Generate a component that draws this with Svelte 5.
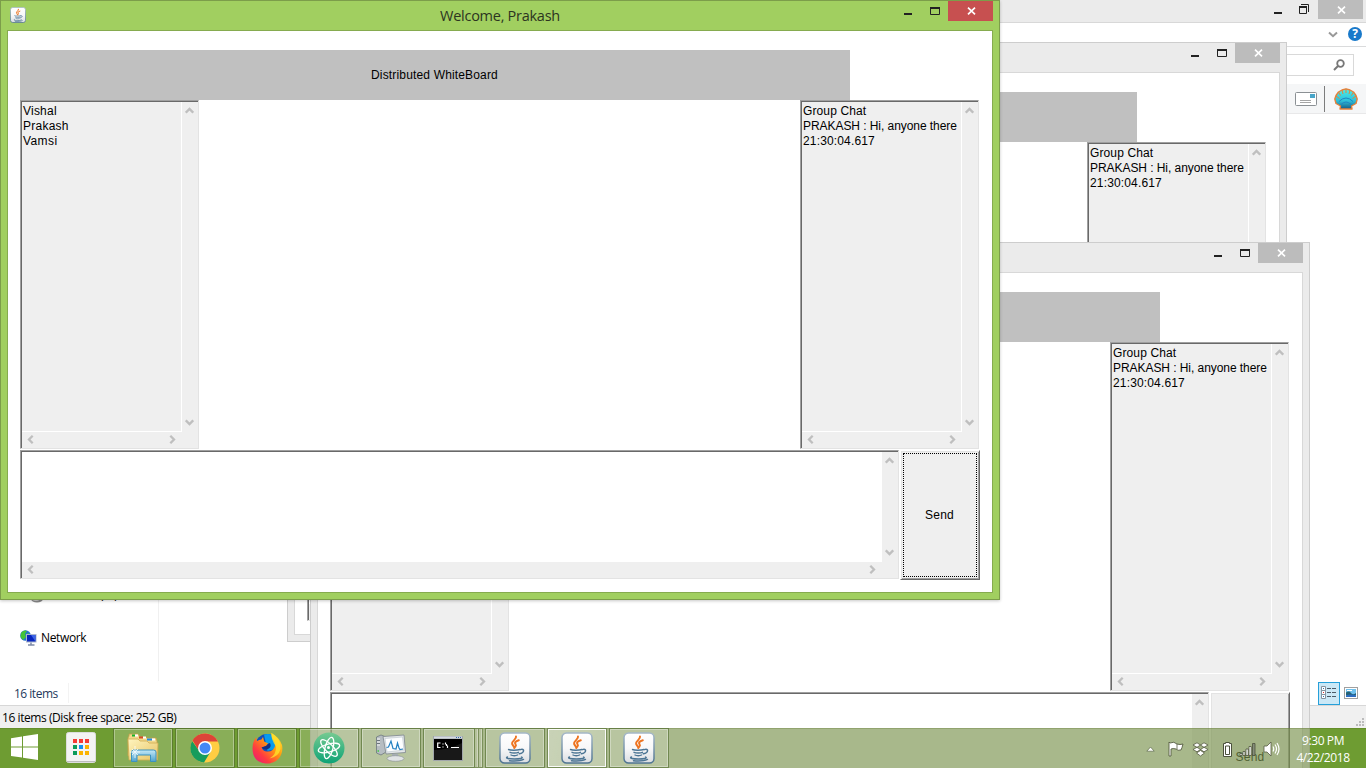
<script>
  const chat = [
    { t: 'Group Chat', s: 0.12 },
    { t: 'PRAKASH : Hi, anyone there', s: -0.06 },
    { t: '21:30:04.617', s: 0.15 }
  ];
  const names = [{ t: 'Vishal', s: 0.22 }, { t: 'Prakash', s: 0.25 }, { t: 'Vamsi', s: 0.4 }];
  const windows = [
    { x: 287, y: 42, title: '', users: [], active: false },
    { x: 310, y: 242, title: '', users: [], active: false },
    { x: 0, y: 0, title: 'Welcome, Prakash', users: names, active: true }
  ];
  const tasks = ['folder', 'chrome', 'firefox', 'atom', 'monitor', 'cmd', 'java', 'java-on', 'java'];
</script>

{#snippet java(size)}
  <svg width={size} height={size} viewBox="0 0 32 32">
    <defs>
      <linearGradient id="jb" x1="0" y1="0" x2="0" y2="1"><stop offset="0" stop-color="#fff" /><stop offset="0.5" stop-color="#f8f8f9" /><stop offset="1" stop-color="#dadde1" /></linearGradient>
      <linearGradient id="je" x1="0" y1="0" x2="0" y2="1"><stop offset="0" stop-color="#a5b8c8" /><stop offset="1" stop-color="#4e7391" /></linearGradient>
    </defs>
    <rect x="1" y="1" width="30" height="30" rx="4.5" fill="url(#jb)" stroke="url(#je)" stroke-width="1.5" />
    <g fill="none" stroke-linecap="round">
      <path d="M17 4.500c.8 3-4.500 4.200-3.900 7.300.3 1.500 2 2.400 2.300 4.200M19.800 8.300c-3.300 1-4.600 2.200-3.300 3.800.8 1 .4 2-.3 2.900" stroke="#ee7420" stroke-width="2" />
      <path d="M9.500 17.500c2 .9 8 .9 11.500 0M11 20.300c2 1 6.500 1 8.500 0M12 23c1.500.9 5 .9 6.500 0M8.500 25c-3 1.300 2 2 7 2s9.500-.7 7-2M10.500 28.800c5 .4 11 .1 14-1.400" stroke="#4c7594" stroke-width="1.400" />
      <path d="M21.500 17.600c4-1.300 4.600 2.900-1.200 4.200" stroke="#4c7594" stroke-width="1.500" />
    </g>
  </svg>
{/snippet}

{#snippet chev(dir)}
  <svg class="chev {dir}" width="9" height="7" viewBox="0 0 9 7"><path d="M.8 5.700 4.500 2 8.200 5.700" fill="none" stroke="#bfbfbf" stroke-width="2.300" /></svg>
{/snippet}

{#snippet scrollArea(lines, kind)}
  <div class="area {kind}">
    <div class="text">{#each lines as l}<div style="letter-spacing:{l.s}px">{l.t}</div>{/each}</div>
    <div class="vbar">{@render chev('up')}{@render chev('down')}</div>
    <div class="hbar">{@render chev('left')}{@render chev('right')}</div>
  </div>
{/snippet}

{#snippet controls(restore)}
  <div class="controls">
    <span class="min"><i></i></span>
    <span class="max">
      {#if restore}
        <svg width="10" height="10" viewBox="0 0 10 10"><path d="M.5 3h7v6.500h-7zM2 .5h7.500V8" fill="none" stroke="#222" /><path d="M0 3h8" stroke="#222" stroke-width="2" /></svg>
      {:else}
        <svg width="10" height="8" viewBox="0 0 10 8"><path d="M.5 1h9v6.500h-9z" fill="none" stroke="#222" /><path d="M0 1h10" stroke="#222" stroke-width="2" /></svg>
      {/if}
    </span>
    <span class="close"><svg width="9" height="8" viewBox="0 0 9 8"><path d="M1 .7 8 7.300M8 .7 1 7.300" stroke="#fff" stroke-width="1.700" /></svg></span>
  </div>
{/snippet}

<div class="desktop">
  <div class="explorer">
    <div class="ex-title">{@render controls(true)}</div>
    <div class="ex-ribbon">
      <svg width="10" height="7" viewBox="0 0 10 7"><path d="M1 1.500 5 5.200 9 1.500" fill="none" stroke="#999" stroke-width="2" /></svg>
      <span class="help">?</span>
    </div>
    <div class="ex-address">
      <div class="search"><svg width="12" height="12" viewBox="0 0 12 12"><circle cx="7.500" cy="4.500" r="3.300" fill="none" stroke="#777" stroke-width="1.800" /><path d="M5 7 1 11" stroke="#777" stroke-width="2" /></svg></div>
    </div>
    <div class="ex-tools">
      <svg width="22" height="14" viewBox="0 0 22 14"><rect x=".5" y=".5" width="21" height="13" rx="1" fill="#fff" stroke="#8b9094" /><path d="M15 2h5v4h-5z" fill="#48a5c9" /><path d="M5 8.500h11M5 10.500h11" stroke="#a5a5a5" /></svg>
      <i class="bar"></i>
      <svg width="24" height="22" viewBox="0 0 24 22">
        <defs><linearGradient id="sh" x1="0" y1="0" x2="0" y2="1"><stop offset="0" stop-color="#4af0ea" /><stop offset=".6" stop-color="#2fbfd8" /><stop offset="1" stop-color="#155a86" /></linearGradient></defs>
        <path d="M6 21 6.500 18 2 15.500 .8 11 2 7.500 4.500 4 8 2 12 .8l4 1.200L19.500 4 22 7.500l1.200 3.500L22 15.500l-4.500 2.500 .5 3z" fill="url(#sh)" stroke="#e6813a" stroke-width="1.400" stroke-linejoin="round" />
        <path d="M12 1v4M8 2l1 4M16 2l-1 4M4.500 4l2 3.500M19.500 4l-2 3.500M2 8l3.500 2.500M22 8l-3.500 2.500" stroke="#e6813a" stroke-width="1" />
        <path d="M5 13.500q7-7 14 0M7 16.500q5-5 10 0" fill="none" stroke="#1f86c4" />
      </svg>
    </div>
    <div class="ex-body">
      <div class="nav">
        <div class="row drive"><svg width="16" height="16" viewBox="0 0 16 16"><ellipse cx="8" cy="12" rx="6" ry="3.500" fill="#888" /><ellipse cx="7" cy="11" rx="5" ry="3" fill="#ccc" /></svg><span>(C:)</span></div>
        <div class="row">
          <svg width="17" height="16" viewBox="0 0 17 16"><circle cx="5.500" cy="5.500" r="5.300" fill="#2574cf" /><path d="M1 3Q4-.5 7 1L5 4 6 7 3 10 .5 7zM7 3l3 1v3z" fill="#43c436" /><rect x="6" y="4" width="10.500" height="8.500" fill="#aab6cd" /><rect x="7" y="5" width="8.500" height="6.500" fill="#0825bd" /><path d="M11 5h4.500v6.500z" fill="#3d64e6" /><path d="M11 12.500v2M8 15h6.500" stroke="#7e8aa8" stroke-width="1.500" /></svg>
          <span>Network</span>
        </div>
      </div>
    </div>
    <div class="ex-details">
      <span class="count">16 items</span>
      <div class="views">
        <span class="sel"><svg width="16" height="14" viewBox="0 0 16 14"><g fill="#fff" stroke="#8593a0"><path d="M.5.500h4v4h-4zM.5 4.500h4v4h-4zM.5 8.500h4v4h-4z" /></g><path d="M2 2.500h1M2 10.500h1" stroke="#3674ad" /><path d="M2 6.500h1" stroke="#d33" /><path d="M6 2.500h4M11 2.500h4M6 6.500h4M11 6.500h4M6 10.500h4M11 10.500h4" stroke="#4c5a66" /></svg></span>
        <svg width="14" height="12" viewBox="0 0 14 12"><rect x=".5" y=".5" width="13" height="11" fill="#fff" stroke="#a0a0a0" /><path d="M2 2h10v8H2z" fill="#6fc1ed" /><path d="M2 5.500q3-2 5 .5t5 0v2.500H2z" fill="#276275" /><path d="M2 8.500q5-2 10 0v1.500H2z" fill="#2b6cc0" /><path d="M3 3.500h5" stroke="#fff" /></svg>
      </div>
    </div>
    <div class="ex-status"><span>16 items (Disk free space: 252 GB)</span>
      <svg width="9" height="9" viewBox="0 0 9 9" fill="#bcbcbc"><path d="M6 0h2v2H6zM3 3h2v2H3zM6 3h2v2H6zM0 6h2v2H0zM3 6h2v2H3zM6 6h2v2H6z" /></svg>
    </div>
  </div>

  {#each windows as w}
    <div class="window" class:active={w.active} style="left:{w.x}px;top:{w.y}px">
      <div class="titlebar">
        {#if w.active}<span class="appicon">{@render java(16)}</span>{/if}
        <span class="title">{w.title}</span>
        {@render controls(false)}
      </div>
      <div class="client">
        <div class="banner">Distributed WhiteBoard</div>
        <div class="middle">
          {@render scrollArea(w.users, 'list')}
          <div class="canvas"></div>
          {@render scrollArea(chat, 'list')}
        </div>
        <div class="compose">
          {@render scrollArea([], 'input')}
          <div class="send"><span>Send</span></div>
        </div>
      </div>
    </div>
  {/each}

  <div class="taskbar">
    <div class="start"><svg width="27" height="27" viewBox="0 0 27 27" fill="#fff"><path d="M0 4.200 11 2.500V12.500H0zM12 2.300 27 0V12.500H12zM0 13.500H11V23.500L0 22zM12 13.500H27V26L12 23.700z" /></svg></div>
    <div class="apps">
      <svg width="30" height="31" viewBox="0 0 30 31"><rect x=".5" y=".5" width="29" height="30" rx="2" fill="#f3f3f3" stroke="#ddd" /><path d="M1 29.500h28" stroke="#bcbcbc" /><path d="M7 7h4v4H7zM13 7h4v4h-4zM19 7h4v4h-4z" fill="#f53b35" /><path d="M7 13h4v4H7zM7 19h4v4H7z" fill="#0b9b5a" /><path d="M13 13h4v4h-4z" fill="#1592ee" /><path d="M19 13h4v4h-4zM13 19h4v4h-4zM19 19h4v4h-4z" fill="#fbb300" /></svg>
    </div>
    {#each tasks as t}
      <div class="task" class:on={t === 'java-on'} class:stack={t === 'cmd'}>
        <div class="face">
          {#if t === 'folder'}
            <svg width="32" height="30" viewBox="0 0 32 30"><defs><linearGradient id="fo" x1="0" y1="0" x2="1" y2="1"><stop offset="0" stop-color="#fff5bf" /><stop offset="1" stop-color="#e8c465" /></linearGradient><linearGradient id="fb" x1="0" y1="0" x2="0" y2="1"><stop offset="0" stop-color="#c5e9f7" /><stop offset="1" stop-color="#4fa3cf" /></linearGradient></defs>
              <path d="M2 3V1h9l2 3h6l1 1h9l1 3v15H1V5z" fill="#f0d88a" stroke="#c29f49" stroke-width=".8" /><path d="M5 1.500h3v2H5z" fill="#14b32b" /><path d="M12 3.500h4v2h-4z" fill="#d64b27" /><path d="M20 5.500h5v2h-5z" fill="#268be0" /><path d="M8 2.500h3M16 4.500h3M25 6.500h3" stroke="#fff" stroke-width="2" />
              <path d="M1 6h10l2 2h7l2 2h9l-.5 17H2z" fill="url(#fo)" stroke="#d0ac50" stroke-width=".8" /><path d="M4.500 28.500V19q0-2 2-2h20q2.500 0 2.500 2v9.500h-5.500V22H10v6.500z" fill="url(#fb)" stroke="#3d92bf" /><path d="M8 13v12M3 19h10M5 16l6 6M11 16l-6 6" stroke="#fff" stroke-width="1" opacity=".75" /></svg>
          {:else if t === 'chrome'}
            <svg width="30" height="30" viewBox="0 0 30 30"><circle cx="15" cy="15" r="14.500" fill="#ffcd42" /><path d="M2.500 7.500A14.500 14.500 0 0 1 28 8.500H15L9 18z" fill="#dc4438" /><path d="M2.200 7.900A14.500 14.500 0 0 0 14 29.500L21 18 9.500 18.500z" fill="#179c5c" /><circle cx="15" cy="15" r="7" fill="#fff" /><circle cx="15" cy="15" r="5.500" fill="#4388f5" /></svg>
          {:else if t === 'firefox'}
            <svg width="31" height="31" viewBox="0 0 31 31"><defs><linearGradient id="ff" x1="1" y1="0" x2="0" y2="1"><stop offset="0" stop-color="#fff13a" /><stop offset=".4" stop-color="#ff9b0f" /><stop offset=".7" stop-color="#ff3c40" /><stop offset="1" stop-color="#e31581" /></linearGradient></defs>
              <circle cx="15" cy="12.500" r="11.500" fill="#124fba" /><path d="M12 1.500q9-2 12.500 5.500l-1 9-8 2z" fill="#079ced" /><path d="M19.500 0q8 4.500 10.500 12c2 10-4.500 18.500-14.500 18.500S.5 24.500.5 15.500Q.5 9 4 4.500L5 8q2-1.500 4.500-1.500L11 4l1.200 4.500 4 2-2 2.500-4.500 1.500q1.500 4.500 6 4 6 0 7.500-6l-.7-3.500Q19 5 19.500 0z" fill="url(#ff)" /><path d="M19.500 0q10.500 6.500 9 16-2 8-11 9.500 7-4 6.500-12Q18.500 6 19.500 0z" fill="#ffe52c" opacity=".75" /><path d="M9.500 14.500q3 3 6.500 1.500 4-2 2-6l-2 .8-2 2.200z" fill="#162f83" /></svg>
          {:else if t === 'atom'}
            <svg width="32" height="32" viewBox="0 0 32 32"><defs><linearGradient id="at" x1="0" y1="0" x2="0" y2="1"><stop offset="0" stop-color="#76ca91" /><stop offset="1" stop-color="#0da376" /></linearGradient></defs><circle cx="16" cy="16" r="15.500" fill="url(#at)" /><g fill="none" stroke="#fff" stroke-width="1.300"><ellipse cx="16" cy="16" rx="11" ry="4" transform="rotate(-15 16 16)" /><ellipse cx="16" cy="16" rx="11" ry="4" transform="rotate(45 16 16)" /><ellipse cx="16" cy="16" rx="11" ry="4" transform="rotate(105 16 16)" /></g><circle cx="15.500" cy="15.500" r="1.500" fill="#fff" /></svg>
          {:else if t === 'monitor'}
            <svg width="32" height="28" viewBox="0 0 32 28"><path d="M1.500 3 6 1l5 2v15l-5 3-4.500-2z" fill="#b6bdc2" stroke="#6d777e" stroke-width=".8" /><path d="M2 5h3M2 8h3M2 11h3" stroke="#f4f4f4" /><path d="M2 6.500h3M2 9.500h3" stroke="#59636b" stroke-width=".8" /><path d="M2.500 17h1.500" stroke="#3ecb3e" stroke-width="1.500" /><path d="M8 2.500 29 1l1.500 17.500L11 20z" fill="#e4e7e9" stroke="#858d94" stroke-width=".9" /><path d="M10 4.500 27.500 3 29 16l-17 2z" fill="#fdfeff" stroke="#b9c4cc" stroke-width=".6" /><path d="M11.500 13.500l2-.5 2.500-6 2 7.500 3 .500 1.500-6 1.500 5 1 1.500 3-.500" fill="none" stroke="#2481c2" stroke-width="1.200" /><path d="M17 20h6l1 4h-7z" fill="#a7aeb3" /><ellipse cx="20.500" cy="24.500" rx="8.500" ry="2.800" fill="#e0e3e5" stroke="#8f969b" stroke-width=".7" /></svg>
          {:else if t === 'cmd'}
            <svg width="30" height="25" viewBox="0 0 30 25"><rect width="30" height="25" fill="#a2a7ab" /><path d="M1 3h28v21H1z" fill="#000" /><path d="M1 14Q16 14 29 7v17H1z" fill="#181818" /><path d="M1 1.500h28" stroke="#d5dae0" stroke-width="2" /><path d="M23 1.500h1M25 1.500h1M27 1.500h1" stroke="#356aaa" /><path d="M7.500 7H4.700v4.500h2.800M10 7.500v1M10 10.500v1M12.500 6.500v2M13.500 8v2M14.500 9.500v2.500M18 11.500h8" fill="none" stroke="#fff" stroke-width="1.200" /></svg>
          {:else}
            {@render java(32)}
          {/if}
        </div>
        {#if t === 'cmd'}<i></i><i></i>{/if}
      </div>
    {/each}
    <div class="tray">
      <svg class="t1" width="9" height="6" viewBox="0 0 9 6"><path d="M.8 5.200 4.500 1 8.200 5.200z" fill="#fff" stroke="#5f6a4d" stroke-width=".7" /></svg>
      <svg class="t2" width="17" height="17" viewBox="0 0 17 17"><path d="M2 2q4-2 7 1 3 1 6 0-1 4-2 6-3 1-5-1-3-1-5 0v7H1V1z" fill="#fff" stroke="#555b42" stroke-width=".9" /><path d="M9 3v5" stroke="#555b42" stroke-width=".8" /></svg>
      <svg class="t3" width="17" height="15" viewBox="0 0 17 15" fill="#fff" stroke="#555b42" stroke-width=".8"><path d="M5 .8 8.500 3 5 5.300 1 3zM12 .8 16 3 12 5.300 8.500 3zM1 7.500 5 5.300 8.500 7.500 5 9.800zM8.500 7.500 12 5.300 16 7.500 12 9.800zM4.500 11 8.500 8.500 12.500 11 8.500 14z" /></svg>
      <svg class="t4" width="11" height="17" viewBox="0 0 11 17"><path d="M3.500 1.500h4v1h2v13h-8v-13h2z" fill="#fff" stroke="#4b513c" /><path d="M3.500 5h4v8.500h-4z" fill="#fff" stroke="#4b513c" /></svg>
      <svg class="t5" width="17" height="13" viewBox="0 0 17 13" fill="#fff" stroke="#4b513c" stroke-width=".8"><path d="M1 10.500h2v2H1zM4 8.500h2v4H4zM7 6h2.200v6.500H7zM10 3.500h2.200v9H10z" /><path d="M13.500.500h2.500v12h-2.500z" fill="#858d79" /></svg>
      <svg class="t6" width="17" height="16" viewBox="0 0 17 16"><path d="M1 5h3l4-4v14l-4-4H1z" fill="#fff" stroke="#555b42" stroke-width=".8" /><path d="M10 5.500q1.500 2.500 0 5M12 3.500q3 4.500 0 9M14 2q4 6 0 12" fill="none" stroke="#fff" stroke-width="1.200" /></svg>
      <div class="clock"><div>9:30 PM</div><div>4/22/2018</div></div>
    </div>
  </div>
</div>

<style>
  :global(body) { margin: 0; overflow: hidden; }
  .desktop { position: relative; width: 1366px; height: 768px; overflow: hidden; background: linear-gradient(#5bb000, #4aa400) 0 728px no-repeat; font-family: "Open Sans", "Noto Sans", sans-serif; font-size: 12px; color: #000; }
  .desktop * { box-sizing: border-box; }
  svg { display: block; flex: none; }

  .explorer { height: 728px; display: flex; flex-direction: column; background: #fff; }
  .ex-title { height: 23px; background: #ebebeb; border-bottom: 1px solid #d8d8d8; display: flex; justify-content: flex-end; padding-right: 3px; }
  .ex-ribbon { height: 24px; border-bottom: 1px solid #dadbdc; display: flex; justify-content: flex-end; align-items: center; gap: 10px; padding-right: 4px; }
  .help { width: 14px; height: 14px; border-radius: 50%; background: #1979ca; color: #fff; font: bold 12px/14px "Open Sans", sans-serif; text-align: center; margin-top: -1px; }
  .ex-address { height: 37px; padding: 7px 12px 0 0; display: flex; justify-content: flex-end; }
  .search { width: 300px; height: 22px; border: 1px solid #d9d9d9; display: flex; align-items: center; justify-content: flex-end; padding-right: 8px; }
  .ex-tools { height: 30px; background: #f5f6f7; border-bottom: 1px solid #e8e8e9; display: flex; align-items: center; justify-content: flex-end; padding-right: 8px; }
  .ex-tools .bar { width: 1px; height: 26px; background: #7c7c7c; margin: 0 9px 0 7px; }
  .ex-body { flex: 1; display: flex; }
  .nav { width: 159px; border-right: 1px solid #f0f0f0; display: flex; flex-direction: column; justify-content: flex-end; gap: 26px; padding: 0 0 34px 20px; }
  .row { display: flex; align-items: center; gap: 4px; height: 18px; line-height: 18px; letter-spacing: -.35px; }
  .drive { padding-left: 9px; height: 17px; letter-spacing: 0; }
  .drive span { margin-left: 51px; }
  .ex-details { height: 24px; display: flex; justify-content: space-between; padding: 0 8px 0 14px; color: #1e395b; }
  .count { height: 20px; align-self: center; line-height: 22px; width: 55px; border-right: 1px solid #f3f3f3; letter-spacing: -.5px; white-space: nowrap; }
  .views { display: flex; align-items: center; gap: 4px; }
  .sel { width: 22px; height: 23px; border: 1px solid #26a0da; background: #cbe8f6; display: grid; place-items: center; }
  .ex-status { height: 23px; border-top: 1px solid #d7d7d7; background: #f0f0f0; display: flex; justify-content: space-between; align-items: flex-end; padding: 0 1px 0 2px; line-height: 21px; letter-spacing: -.43px; }
  .ex-status svg { margin-bottom: 1px; }

  .controls { display: flex; height: 20px; margin-left: auto; }
  .controls span { display: flex; justify-content: center; align-items: center; }
  .min { width: 27px; }
  .min i { width: 8px; height: 2px; background: #222; margin-top: 6px; }
  .max { width: 27px; }
  .ex-title .max { padding: 0 1px 1px 0; }
  .close { width: 45px; height: 20px; background: #bcbcbc; padding-left: 1px; }
  .ex-title .close { height: 19px; }
  .ex-title .controls { height: 19px; }

  .window { position: absolute; width: 1000px; height: 600px; background: #ebebeb; border: 1px solid #cdcdcd; padding: 0 6px 6px; display: flex; flex-direction: column; }
  .window.active { background: #a1cf60; border-color: #7c9d4a; box-shadow: 0 1px 3px rgba(0, 0, 0, .22); }
  .titlebar { height: 29px; display: flex; position: relative; }
  .appicon { padding: 6px 0 0 3px; }
  .title { position: absolute; inset: 0; text-align: center; font-size: 14.5px; line-height: 29px; letter-spacing: -.27px; color: #2c3420; }
  .window .controls { position: relative; }
  .window.active .close { background: #c75050; }
  .client { height: 563px; border: 1px solid #d8d8d8; background: #fff; padding: 19px 12px 12px; font-family: "Liberation Sans", Arial, sans-serif; }
  .active .client { border-color: #86ab4f; }
  .banner { width: 830px; height: 50px; background: #c0c0c0; text-align: center; line-height: 51px; letter-spacing: .16px; padding-right: 1px; }
  .middle { display: flex; height: 349px; width: 959px; }
  .canvas { flex: 1; }
  .compose { display: flex; gap: 1px; margin-top: 1px; }

  .area { display: grid; background: #efefef; border: 1px solid #a0a0a0; border-right-color: #e3e3e3; border-bottom-color: #e3e3e3; box-shadow: inset 1px 1px #696969; padding: 1px 0 0 1px; }
  .list { width: 179px; height: 349px; grid-template: 330px 16px / 160px 16px; }
  .input { width: 879px; height: 129px; grid-template: 110px 16px / 860px 16px; }
  .text { padding: 2px 0 0 1px; line-height: 15px; white-space: nowrap; border: 0 solid #fff; }
  .list .text { border-width: 0 1px 1px 0; }
  .input .text { background: #fff; }
  .vbar { display: flex; flex-direction: column; justify-content: space-between; align-items: center; padding: 5px 1px 6px 0; }
  .hbar { display: flex; justify-content: space-between; align-items: center; padding: 0 5px 1px 4px; }
  .down { transform: rotate(180deg); }
  .left { transform: rotate(-90deg); }
  .right { transform: rotate(90deg); }
  .send { width: 80px; height: 130px; background: #efefef; border: 1px solid #fff; border-right-color: #696969; border-bottom-color: #696969; box-shadow: inset 1px 1px #e3e3e3, inset -1px -1px #a0a0a0; padding: 2px; letter-spacing: .2px; }
  .send span { display: flex; align-items: center; justify-content: center; height: 100%; border: 1px solid transparent; }
  .active .send span { border: 1px dotted #000; padding-right: 1px; }

  .taskbar { position: absolute; left: 0; right: 0; top: 728px; height: 40px; display: flex; background: rgba(121, 146, 77, .65); border-top: 1px solid rgba(75, 100, 25, .25); }
  .start { width: 48px; padding: 5px 0 0 11px; }
  .apps { width: 65px; padding: 3px 0 0 18px; }
  .task { width: 60px; height: 40px; margin: -1px 2px 0 0; display: flex; flex: none; }
  .face { flex: 1; display: grid; place-items: center; border: 1px solid rgba(55, 85, 15, .55); box-shadow: inset 0 0 0 1px rgba(255, 255, 255, .33); background: rgba(255, 255, 255, .19); }
  .stack .face { padding-right: 2px; }
  .on .face { background: linear-gradient(100deg, rgba(255, 255, 255, .38), rgba(255, 255, 255, .28)); box-shadow: inset 0 0 0 1px rgba(255, 255, 255, .9); }
  .stack i { width: 4px; border: 1px solid rgba(55, 85, 15, .45); border-left: 0; box-shadow: inset -1px 0 rgba(255, 255, 255, .35); background: rgba(255, 255, 255, .15); }
  .tray { margin-left: auto; display: flex; align-items: center; padding-right: 12px; }
  .tray svg { margin-top: 1px; }
  .t1 { margin-right: 13px; }
  .t2 { margin-right: 7px; }
  .t3 { margin-right: 13px; }
  .t4 { margin-right: 6px; }
  .t5 { margin-right: 7px; }
  .t6 { margin-right: 12px; }
  .clock { width: 62px; color: #fff; text-align: center; line-height: 17px; letter-spacing: -.4px; }
</style>
